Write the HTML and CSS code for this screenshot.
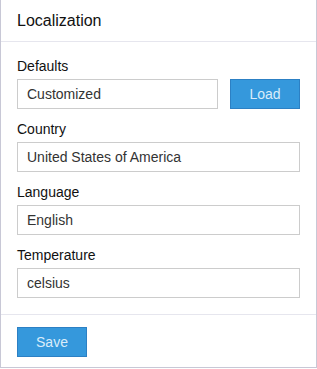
FILE: index.html
```html
<!DOCTYPE html>
<html lang="en">
<head>
    <meta charset="UTF-8">
    <meta name="viewport" content="width=device-width, initial-scale=1.0">
    <title>Localization</title>
    <link rel="stylesheet" href="styles.css">
</head>
<body>
    <div class="panel">
        <div class="panel-header">Localization</div>

        <form class="panel-body">
            <div class="form-group">
                <label for="defaults">Defaults</label>
                <div class="row">
                    <input type="text" id="defaults" value="Customized">
                    <button type="button" class="btn">Load</button>
                </div>
            </div>

            <div class="form-group">
                <label for="country">Country</label>
                <input type="text" id="country" value="United States of America">
            </div>

            <div class="form-group">
                <label for="language">Language</label>
                <input type="text" id="language" value="English">
            </div>

            <div class="form-group">
                <label for="temperature">Temperature</label>
                <input type="text" id="temperature" value="celsius">
            </div>
        </form>

        <div class="panel-footer">
            <button type="button" class="btn">Save</button>
        </div>
    </div>
</body>
</html>
```

FILE: styles.css
```css
* {
    margin: 0;
    padding: 0;
    box-sizing: border-box;
}

body {
    font-family: "Liberation Sans", Arial, sans-serif;
    background: #ffffff;
    color: #222222;
}

.panel {
    width: 317px;
    border: 1px solid #c8c8d6;
    border-top: 0;
    background: #ffffff;
}

.panel-header {
    height: 42px;
    padding: 11px 16px 0;
    font-size: 16px;
    line-height: 19px;
    color: #111111;
    border-bottom: 1px solid #e6e6ee;
}

.panel-body {
    padding: 14px 16px 16px;
    border-bottom: 1px solid #e6e6ee;
}

.form-group {
    margin-bottom: 10px;
}

.form-group:last-child {
    margin-bottom: 0;
}

label {
    display: block;
    font-size: 14px;
    line-height: 20px;
    margin-bottom: 3px;
    color: #111111;
}

.row {
    display: flex;
    gap: 12px;
}

input[type="text"] {
    display: block;
    width: 100%;
    height: 30px;
    padding: 0 9px;
    border: 1px solid #cccccc;
    border-radius: 0;
    font-family: inherit;
    font-size: 14px;
    color: #333333;
    background: #ffffff;
}

.row input[type="text"] {
    flex: 1;
}

.btn {
    display: block;
    width: 70px;
    height: 30px;
    flex-shrink: 0;
    background: #3598dc;
    border: 1px solid #2c80c4;
    color: #d9ecfa;
    font-family: inherit;
    font-size: 14px;
    cursor: pointer;
}

.panel-footer {
    padding: 12px 16px 10px;
}
```
